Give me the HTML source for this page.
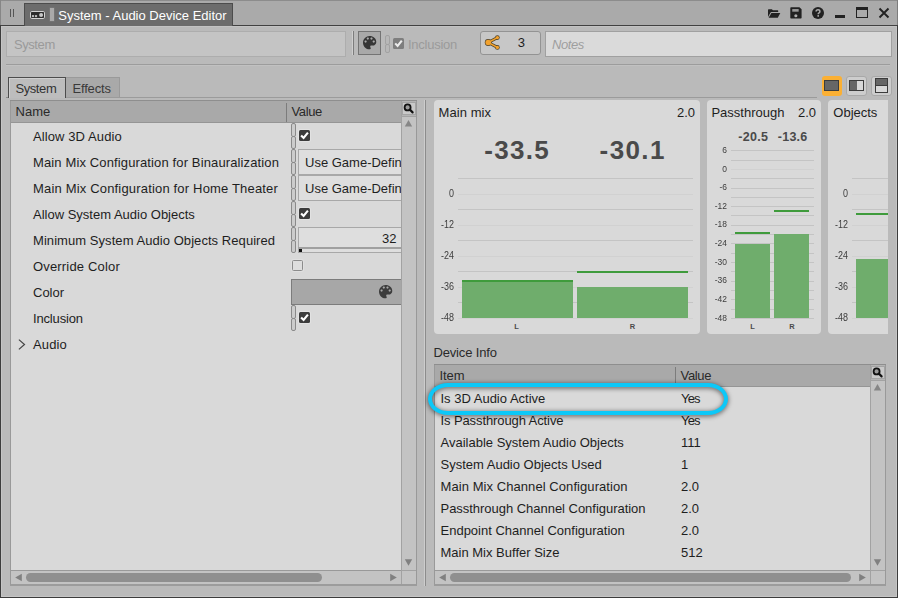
<!DOCTYPE html>
<html lang="en"><head><meta charset="utf-8"><title>System - Audio Device Editor</title>
<style>
html,body{margin:0;padding:0;background:#bababa;}
body{width:898px;height:598px;overflow:hidden;position:relative;font-family:"Liberation Sans",sans-serif;font-size:13px;color:#1e1e1e;}
#root{position:absolute;left:0;top:0;width:898px;height:598px;overflow:hidden;background:#bababa;}
#root div{position:absolute;box-sizing:border-box;}
#root svg{position:absolute;overflow:visible;}
.t{white-space:nowrap;}
.b{white-space:nowrap;font-weight:bold;color:#4a4a4a;}
.lab{white-space:nowrap;color:#3c3c3c;font-size:10.3px;line-height:12px;text-align:right;width:30px;transform:scaleX(0.87);transform-origin:100% 50%;}
</style></head><body><div id="root">
<div style="left:0px;top:0px;width:898px;height:26px;background:#aaaaaa;border-top:1px solid #8c8c8c;border-bottom:1px solid #414141;"></div>
<div style="left:0px;top:26px;width:898px;height:1px;background:#c3c3c3;"></div>
<div style="left:10px;top:9px;width:1px;height:8px;background:#555;"></div>
<div style="left:13px;top:9px;width:1px;height:8px;background:#555;"></div>
<div style="left:24px;top:3px;width:209px;height:23px;background:#6c6c6c;border:1px solid #4c4c4c;border-bottom:none;"></div>
<svg style="left:30px;top:11px" width="15" height="8" viewBox="0 0 15 8"><rect x="0.5" y="0.5" width="14" height="7" rx="1.3" fill="#2c2c2c" stroke="#d2d2d2" stroke-width="1"/><rect x="1.9" y="4.1" width="2.1" height="2" fill="#bcbcbc"/><rect x="4.9" y="4.1" width="2.2" height="2" fill="#bcbcbc"/><circle cx="11.1" cy="3.9" r="2" fill="#c8c8c8"/></svg>
<div style="left:50px;top:8px;width:4px;height:13px;background:#a9a9a9;box-shadow:0 0 0 0.5px rgba(255,255,255,0.12);"></div>
<div class="t" style="left:58.3px;top:8.00px;font-size:13px;line-height:15px;color:#fff;">System - Audio Device Editor</div>
<svg style="left:767.8px;top:8.9px" width="12.3" height="8.7" viewBox="0 0 12.3 8.7"><path d="M0 0.7 Q0 0.2 0.5 0.2 H3.9 L4.9 1.3 H9.7 Q10.2 1.3 10.2 1.8 V3.1 H3.3 Q2.7 3.1 2.4 3.7 L0 8.1 Z" fill="#222"/><path d="M3.4 4 H12.3 L9.8 8.7 H0.6 Z" fill="#222"/></svg>
<svg style="left:790.2px;top:7.1px" width="11.9" height="11.7" viewBox="0 0 12 12"><path d="M0.2 1 Q0.2 0.2 1 0.2 H9.6 L11.8 2.4 V11 Q11.8 11.8 11 11.8 H1 Q0.2 11.8 0.2 11 Z" fill="#222"/><rect x="2.2" y="2.1" width="6.6" height="2.7" fill="#999"/><circle cx="5.9" cy="9" r="1.6" fill="#b0b0b0"/></svg>
<svg style="left:812.1px;top:6.9px" width="12" height="12" viewBox="0 0 12 12"><circle cx="6" cy="6" r="6" fill="#222"/><path d="M4.1 4.6 Q4.1 2.7 6 2.7 Q7.9 2.7 7.9 4.4 Q7.9 5.3 7 5.9 Q6.2 6.4 6.2 7.3" fill="none" stroke="#aaaaaa" stroke-width="1.5"/><rect x="5.4" y="8.1" width="1.6" height="1.6" fill="#aaaaaa"/></svg>
<div style="left:835px;top:15px;width:10px;height:3px;background:#222;"></div>
<div style="left:856px;top:7px;width:12px;height:11px;border:1px solid #222;border-top:3px solid #222;"></div>
<svg style="left:879px;top:8px" width="10" height="10" viewBox="0 0 10 10"><path d="M0.5 0.5 L9.5 9.5 M9.5 0.5 L0.5 9.5" stroke="#222" stroke-width="1.9" fill="none"/></svg>
<div style="left:6px;top:31px;width:340px;height:26px;background:#c4c4c4;border:1px solid #adadad;"></div>
<div class="t" style="left:13.9px;top:36.50px;font-size:13px;line-height:15px;color:#9a9a9a;letter-spacing:-0.4px;">System</div>
<div style="left:352px;top:31px;width:1px;height:24px;background:#cfcfcf;"></div>
<div style="left:353px;top:31px;width:1px;height:24px;background:#7c7c7c;"></div>
<div style="left:358px;top:31px;width:23px;height:24px;background:#a9a9a9;border:1px solid #747474;"></div>
<svg style="left:362.9px;top:35.9px" width="13.3" height="13.3" viewBox="3 3 18 18"><path fill-rule="evenodd" d="M12 3c-4.97 0-9 4.030-9 9s4.030 9 9 9c.830 0 1.500-.670 1.500-1.500 0-.390-.150-.740-.390-1.010-.230-.260-.380-.610-.380-.990 0-.830.670-1.500 1.500-1.500H16c2.760 0 5-2.240 5-5 0-4.420-4.030-8-9-8zm-5.500 9c-.830 0-1.500-.670-1.500-1.500S5.670 9 6.500 9 8 9.670 8 10.500 7.330 12 6.500 12zm3-4C8.670 8 8 7.330 8 6.500S8.670 5 9.500 5s1.500.670 1.500 1.500S10.330 8 9.500 8zm5 0c-.830 0-1.500-.670-1.500-1.500S13.670 5 14.500 5s1.500.670 1.500 1.500S15.330 8 14.500 8zm3 4c-.830 0-1.500-.670-1.500-1.500S16.670 9 17.500 9s1.500.670 1.500 1.500-.670 1.500-1.500 1.500z" fill="#363636"/></svg>
<div style="left:385px;top:35px;width:5px;height:9.5px;background:#b8b8b8;border:1px solid #a2a2a2;border-radius:2px;"></div>
<div style="left:385px;top:43.5px;width:5px;height:9.5px;background:#b8b8b8;border:1px solid #a2a2a2;border-radius:2px;"></div>
<div style="left:393px;top:38px;width:11px;height:11px;background:#7e7e7e;border-radius:1.5px;"></div>
<svg style="left:393px;top:38px" width="11" height="11" viewBox="0 0 11 11"><path d="M2.2 5.4 L4.6 8 L8.8 2.7" stroke="#ececec" stroke-width="2.1" fill="none"/></svg>
<div class="t" style="left:408px;top:36.60px;font-size:13px;line-height:15px;color:#9a9a9a;letter-spacing:-0.25px;">Inclusion</div>
<div style="left:480px;top:31px;width:61px;height:24px;background:#c7c7c7;border:1px solid #939393;border-radius:3px;"></div>
<svg style="left:0;top:0" width="898" height="598"><g fill="#4f4128" stroke="#4f4128"><path d="M488.2 42.5 L497.4 37.6 M488.2 42.5 L497.4 47.4" stroke-width="3" fill="none"/><circle cx="488.2" cy="42.5" r="3.4" stroke="none"/><circle cx="497.4" cy="37.6" r="2.3" stroke="none"/><circle cx="497.4" cy="47.4" r="2.3" stroke="none"/></g><g fill="#f2a22e" stroke="#f2a22e"><path d="M488.2 42.5 L497.4 37.6 M488.2 42.5 L497.4 47.4" stroke-width="1.5" fill="none"/><circle cx="488.2" cy="42.5" r="2.75" stroke="none"/><circle cx="497.4" cy="37.6" r="1.65" stroke="none"/><circle cx="497.4" cy="47.4" r="1.65" stroke="none"/></g></svg>
<div class="t" style="left:517.8px;top:35.20px;font-size:13px;line-height:15px;">3</div>
<div style="left:545px;top:31px;width:347px;height:26px;background:#dadada;border:1px solid #a0a0a0;"></div>
<div class="t" style="left:552px;top:36.50px;font-size:13px;line-height:15px;color:#9e9e9e;font-style:italic;letter-spacing:-0.4px;">Notes</div>
<div style="left:6px;top:64px;width:884px;height:1px;background:#9c9c9c;"></div>
<div style="left:6px;top:65px;width:884px;height:1px;background:#c1c1c1;"></div>
<div style="left:66px;top:97px;width:751px;height:1px;background:#9b9b9b;"></div>
<div style="left:66px;top:77px;width:54px;height:20px;background:#a9a9a9;border:1px solid #9a9a9a;border-bottom:none;border-left:none;"></div>
<div style="left:8px;top:77px;width:58px;height:21px;background:#bdbdbd;border:1px solid #4c4c4c;border-bottom:none;box-shadow:inset 1px 1px 0 #cfcfcf;"></div>
<div style="left:6px;top:97px;width:2px;height:1px;background:#8a8a8a;"></div>
<div class="t" style="left:15.4px;top:80.60px;font-size:13px;line-height:15px;color:#333;letter-spacing:-0.4px;">System</div>
<div class="t" style="left:72.4px;top:80.60px;font-size:13px;line-height:15px;color:#3a3a3a;letter-spacing:-0.15px;">Effects</div>
<div style="left:821.6px;top:75.8px;width:20.0px;height:20.0px;background:#fbb034;border-radius:3px;"></div>
<div style="left:824px;top:80px;width:15.299999999999955px;height:11px;background:#666;border:1px solid #3c3c3c;"></div>
<div style="left:846px;top:76px;width:21px;height:20px;background:#cdcdcd;border:1px solid #a8a8a8;border-radius:3px;"></div>
<div style="left:849px;top:80px;width:15px;height:11px;background:#d8d8d8;border:1px solid #3c3c3c;"></div>
<div style="left:850px;top:81px;width:7px;height:9px;background:#666;"></div>
<div style="left:871px;top:76px;width:21px;height:20px;background:#cdcdcd;border:1px solid #a8a8a8;border-radius:3px;"></div>
<div style="left:875px;top:78px;width:13px;height:15px;background:#d8d8d8;border:1px solid #3c3c3c;"></div>
<div style="left:876px;top:79px;width:11px;height:7px;background:#666;border-bottom:1px solid #3c3c3c;"></div>
<div style="left:10px;top:100px;width:407px;height:486px;background:#d9d9d9;border:1px solid #999999;border-bottom:2px solid #9c9c9c;"></div>
<div style="left:11px;top:101px;width:390px;height:21.5px;background:#a9a9a9;"></div>
<div style="left:11px;top:122px;width:390px;height:1px;background:#959595;"></div>
<div style="left:10px;top:100px;width:407px;height:1px;background:#8e8e8e;"></div>
<div style="left:286px;top:103px;width:1px;height:18.5px;background:#7c7c7c;"></div>
<div style="left:401px;top:116px;width:15px;height:455px;background:#c3c3c3;border:1px solid #a2a2a2;border-right:none;"></div>
<div style="left:401px;top:101px;width:15px;height:15px;background:#b4b4b4;border-left:1px solid #a0a0a0;"></div>
<div style="left:402px;top:102px;width:14px;height:13px;background:#c9c9c9;border:1px solid #a4a4a4;"></div>
<svg style="left:0;top:0" width="898" height="598"><circle cx="407.6" cy="107.4" r="3" fill="#9a9a9a" stroke="#111" stroke-width="1.8"/><path d="M410.0 109.80000000000001 L412.6 112.4" stroke="#111" stroke-width="2.2" stroke-linecap="round"/></svg>
<svg style="left:0;top:0" width="898" height="598"><polygon points="404.8,126.6 412.2,126.6 408.5,120.0" fill="#868686"/></svg>
<svg style="left:0;top:0" width="898" height="598"><polygon points="404.8,559.2 412.2,559.2 408.5,565.8" fill="#808080"/></svg>
<div style="left:11px;top:570px;width:390px;height:14px;background:#c3c3c3;border-top:1px solid #999;"></div>
<div style="left:401px;top:570px;width:15px;height:14px;background:#c3c3c3;border-top:1px solid #a2a2a2;border-left:1px solid #a2a2a2;"></div>
<div style="left:26px;top:573px;width:296px;height:9px;background:#8f8f8f;border-radius:4.5px;"></div>
<svg style="left:0;top:0" width="898" height="598"><polygon points="21.8,573.8 21.8,581.2 15.2,577.5" fill="#808080"/></svg>
<svg style="left:0;top:0" width="898" height="598"><polygon points="390.2,573.8 390.2,581.2 396.8,577.5" fill="#808080"/></svg>
<div class="t" style="left:15.6px;top:103.70px;font-size:13px;line-height:15px;color:#2a2a2a;">Name</div>
<div class="t" style="left:291.4px;top:103.70px;font-size:13px;line-height:15px;color:#2a2a2a;letter-spacing:-0.35px;">Value</div>
<div class="t" style="left:33px;top:128.80px;font-size:13px;line-height:15px;letter-spacing:0.1px;">Allow 3D Audio</div>
<div class="t" style="left:33px;top:154.80px;font-size:13px;line-height:15px;letter-spacing:0.13px;">Main Mix Configuration for Binauralization</div>
<div class="t" style="left:33px;top:180.80px;font-size:13px;line-height:15px;letter-spacing:0.175px;">Main Mix Configuration for Home Theater</div>
<div class="t" style="left:33px;top:206.80px;font-size:13px;line-height:15px;">Allow System Audio Objects</div>
<div class="t" style="left:33px;top:232.80px;font-size:13px;line-height:15px;letter-spacing:0.06px;">Minimum System Audio Objects Required</div>
<div class="t" style="left:33px;top:258.80px;font-size:13px;line-height:15px;letter-spacing:0.17px;">Override Color</div>
<div class="t" style="left:33px;top:284.80px;font-size:13px;line-height:15px;">Color</div>
<div class="t" style="left:33px;top:310.80px;font-size:13px;line-height:15px;letter-spacing:-0.16px;">Inclusion</div>
<div class="t" style="left:33px;top:336.80px;font-size:13px;line-height:15px;letter-spacing:0.12px;">Audio</div>
<svg style="left:0;top:0" width="898" height="598"><path d="M18.9 339.6 L24.5 344.5 L18.9 349.4" stroke="#444" stroke-width="1.2" fill="none"/></svg>
<div style="left:291px;top:123px;width:5px;height:13.5px;background:#cccccc;border:1px solid #8a8a8a;border-radius:2px;"></div>
<div style="left:291px;top:135.5px;width:5px;height:13.199999999999989px;background:#cccccc;border:1px solid #8a8a8a;border-radius:2px;"></div>
<div style="left:291px;top:149px;width:5px;height:13.5px;background:#cccccc;border:1px solid #8a8a8a;border-radius:2px;"></div>
<div style="left:291px;top:161.5px;width:5px;height:13.199999999999989px;background:#cccccc;border:1px solid #8a8a8a;border-radius:2px;"></div>
<div style="left:291px;top:175px;width:5px;height:13.5px;background:#cccccc;border:1px solid #8a8a8a;border-radius:2px;"></div>
<div style="left:291px;top:187.5px;width:5px;height:13.199999999999989px;background:#cccccc;border:1px solid #8a8a8a;border-radius:2px;"></div>
<div style="left:291px;top:201px;width:5px;height:13.5px;background:#cccccc;border:1px solid #8a8a8a;border-radius:2px;"></div>
<div style="left:291px;top:213.5px;width:5px;height:13.199999999999989px;background:#cccccc;border:1px solid #8a8a8a;border-radius:2px;"></div>
<div style="left:291px;top:227px;width:5px;height:13.5px;background:#cccccc;border:1px solid #8a8a8a;border-radius:2px;"></div>
<div style="left:291px;top:239.5px;width:5px;height:13.199999999999989px;background:#cccccc;border:1px solid #8a8a8a;border-radius:2px;"></div>
<div style="left:291px;top:305px;width:5px;height:13.5px;background:#cccccc;border:1px solid #8a8a8a;border-radius:2px;"></div>
<div style="left:291px;top:317.5px;width:5px;height:13.199999999999989px;background:#cccccc;border:1px solid #8a8a8a;border-radius:2px;"></div>
<div style="left:299px;top:130px;width:11px;height:11px;background:#3c3c3c;border-radius:1.5px;box-shadow:0 0 0 1px rgba(255,255,255,0.25);"></div>
<svg style="left:299px;top:130px" width="11" height="11" viewBox="0 0 11 11"><path d="M2.1 5.4 L4.6 8 L8.9 2.6" stroke="#fff" stroke-width="2.1" fill="none"/></svg>
<div style="left:299px;top:208px;width:11px;height:11px;background:#3c3c3c;border-radius:1.5px;box-shadow:0 0 0 1px rgba(255,255,255,0.25);"></div>
<svg style="left:299px;top:208px" width="11" height="11" viewBox="0 0 11 11"><path d="M2.1 5.4 L4.6 8 L8.9 2.6" stroke="#fff" stroke-width="2.1" fill="none"/></svg>
<div style="left:299px;top:312px;width:11px;height:11px;background:#3c3c3c;border-radius:1.5px;box-shadow:0 0 0 1px rgba(255,255,255,0.25);"></div>
<svg style="left:299px;top:312px" width="11" height="11" viewBox="0 0 11 11"><path d="M2.1 5.4 L4.6 8 L8.9 2.6" stroke="#fff" stroke-width="2.1" fill="none"/></svg>
<div style="left:298px;top:149px;width:103px;height:25.5px;background:#dedede;border:1px solid #a8a8a8;border-right:none;overflow:hidden;"></div>
<div class="t" style="left:305px;top:154.70px;font-size:13px;line-height:15px;overflow:hidden;width:96px;">Use Game-Defin</div>
<div style="left:298px;top:175px;width:103px;height:25.5px;background:#dedede;border:1px solid #a8a8a8;border-right:none;overflow:hidden;"></div>
<div class="t" style="left:305px;top:180.70px;font-size:13px;line-height:15px;overflow:hidden;width:96px;">Use Game-Defin</div>
<div style="left:298px;top:227px;width:103px;height:21px;background:#dedede;border:1px solid #a8a8a8;border-right:none;"></div>
<div class="t" style="left:382px;top:231.00px;font-size:13px;line-height:15px;">32</div>
<div style="left:298px;top:247px;width:103px;height:6px;background:#dedede;border:1px solid #a8a8a8;border-right:none;border-top:2px solid #a0a0a0;"></div>
<div style="left:299px;top:249px;width:3px;height:3px;background:#111;"></div>
<div style="left:292px;top:260px;width:11px;height:11px;background:#dedede;border:1px solid #8c8c8c;border-radius:1.5px;box-shadow:0 0 0 1px rgba(255,255,255,0.18);"></div>
<div style="left:291px;top:279px;width:110px;height:26px;background:#a7a7a7;border:1px solid #7c7c7c;border-right:none;"></div>
<svg style="left:378.8px;top:285.1px" width="13.3" height="13.3" viewBox="3 3 18 18"><path fill-rule="evenodd" d="M12 3c-4.97 0-9 4.030-9 9s4.030 9 9 9c.830 0 1.500-.670 1.500-1.500 0-.390-.150-.740-.390-1.010-.230-.260-.380-.610-.380-.990 0-.830.670-1.500 1.500-1.500H16c2.760 0 5-2.240 5-5 0-4.420-4.030-8-9-8zm-5.500 9c-.830 0-1.500-.670-1.500-1.500S5.670 9 6.500 9 8 9.670 8 10.500 7.330 12 6.500 12zm3-4C8.670 8 8 7.330 8 6.500S8.670 5 9.500 5s1.500.670 1.500 1.500S10.330 8 9.500 8zm5 0c-.830 0-1.500-.670-1.500-1.500S13.670 5 14.500 5s1.500.670 1.500 1.500S15.330 8 14.500 8zm3 4c-.830 0-1.500-.670-1.500-1.500S16.670 9 17.500 9s1.500.670 1.500 1.500-.670 1.500-1.500 1.500z" fill="#3c3c3c"/></svg>
<div style="left:424px;top:100px;width:1px;height:486px;background:#cdcdcd;"></div>
<div style="left:425px;top:100px;width:1px;height:486px;background:#8c8c8c;"></div>
<div style="left:434px;top:100px;width:266px;height:234px;background:#d9d9d9;border-radius:4px;"></div>
<div class="t" style="left:438.6px;top:104.70px;font-size:13px;line-height:15px;letter-spacing:0.05px;">Main mix</div>
<div class="t" style="right:203px;top:104.70px;font-size:13px;line-height:15px;">2.0</div>
<div class="b" style="left:484.2px;top:135px;font-size:26px;line-height:30px;letter-spacing:1.3px;">-33.5</div>
<div class="b" style="left:599.6px;top:135px;font-size:26px;line-height:30px;letter-spacing:1.4px;">-30.1</div>
<div style="left:458px;top:178px;width:235px;height:1px;background:#c4c4c4;"></div>
<div style="left:458px;top:194px;width:235px;height:1px;background:#d1d1d1;"></div>
<div style="left:458px;top:209px;width:235px;height:1px;background:#c4c4c4;"></div>
<div style="left:458px;top:225px;width:235px;height:1px;background:#d1d1d1;"></div>
<div style="left:458px;top:240px;width:235px;height:1px;background:#c4c4c4;"></div>
<div style="left:458px;top:256px;width:235px;height:1px;background:#d1d1d1;"></div>
<div style="left:458px;top:271px;width:235px;height:1px;background:#c4c4c4;"></div>
<div style="left:458px;top:287px;width:235px;height:1px;background:#d1d1d1;"></div>
<div style="left:458px;top:302px;width:235px;height:1px;background:#c4c4c4;"></div>
<div style="left:458px;top:318px;width:235px;height:1px;background:#d1d1d1;"></div>
<div class="lab" style="left:423.6px;top:187.5px;">0</div>
<div class="lab" style="left:423.6px;top:218.5px;">-12</div>
<div class="lab" style="left:423.6px;top:249.5px;">-24</div>
<div class="lab" style="left:423.6px;top:280.5px;">-36</div>
<div class="lab" style="left:423.6px;top:311.5px;">-48</div>
<div style="left:462px;top:280px;width:110.5px;height:38px;background:#6fad6c;border-top:2px solid #3f9b3c;"></div>
<div style="left:577px;top:287px;width:111px;height:31px;background:#6fad6c;"></div>
<div style="left:577px;top:271px;width:111px;height:2px;background:#3f9b3c;"></div>
<div class="b" style="left:514.3px;top:322px;font-size:7.5px;line-height:10px;color:#4a4a4a;">L</div>
<div class="b" style="left:629.8px;top:322px;font-size:7.5px;line-height:10px;color:#4a4a4a;">R</div>
<div style="left:707px;top:100px;width:114px;height:234px;background:#d9d9d9;border-radius:4px;"></div>
<div class="t" style="left:711.4px;top:104.70px;font-size:13px;line-height:15px;letter-spacing:0.02px;">Passthrough</div>
<div class="t" style="right:82px;top:104.70px;font-size:13px;line-height:15px;">2.0</div>
<div class="b" style="left:738.2px;top:130.2px;font-size:12.5px;line-height:15px;letter-spacing:0.3px;">-20.5</div>
<div class="b" style="left:777.8px;top:130.2px;font-size:12.5px;line-height:15px;letter-spacing:0.25px;">-13.6</div>
<div style="left:731px;top:150px;width:83px;height:1px;background:#c4c4c4;"></div>
<div style="left:731px;top:160px;width:83px;height:1px;background:#c4c4c4;"></div>
<div style="left:731px;top:169px;width:83px;height:1px;background:#d1d1d1;"></div>
<div style="left:731px;top:178px;width:83px;height:1px;background:#c4c4c4;"></div>
<div style="left:731px;top:188px;width:83px;height:1px;background:#c4c4c4;"></div>
<div style="left:731px;top:197px;width:83px;height:1px;background:#c4c4c4;"></div>
<div style="left:731px;top:206px;width:83px;height:1px;background:#c4c4c4;"></div>
<div style="left:731px;top:215px;width:83px;height:1px;background:#c4c4c4;"></div>
<div style="left:731px;top:225px;width:83px;height:1px;background:#c4c4c4;"></div>
<div style="left:731px;top:234px;width:83px;height:1px;background:#c4c4c4;"></div>
<div style="left:731px;top:243px;width:83px;height:1px;background:#c4c4c4;"></div>
<div style="left:731px;top:253px;width:83px;height:1px;background:#c4c4c4;"></div>
<div style="left:731px;top:262px;width:83px;height:1px;background:#c4c4c4;"></div>
<div style="left:731px;top:271px;width:83px;height:1px;background:#c4c4c4;"></div>
<div style="left:731px;top:281px;width:83px;height:1px;background:#c4c4c4;"></div>
<div style="left:731px;top:290px;width:83px;height:1px;background:#c4c4c4;"></div>
<div style="left:731px;top:299px;width:83px;height:1px;background:#c4c4c4;"></div>
<div style="left:731px;top:309px;width:83px;height:1px;background:#c4c4c4;"></div>
<div style="left:731px;top:318px;width:83px;height:1px;background:#c4c4c4;"></div>
<div class="lab" style="left:697px;top:143.9px;font-size:9.2px;transform:scaleX(0.92);">6</div>
<div class="lab" style="left:697px;top:162.5px;font-size:9.2px;transform:scaleX(0.92);">0</div>
<div class="lab" style="left:697px;top:181.1px;font-size:9.2px;transform:scaleX(0.92);">-6</div>
<div class="lab" style="left:697px;top:199.8px;font-size:9.2px;transform:scaleX(0.92);">-12</div>
<div class="lab" style="left:697px;top:218.4px;font-size:9.2px;transform:scaleX(0.92);">-18</div>
<div class="lab" style="left:697px;top:237.0px;font-size:9.2px;transform:scaleX(0.92);">-24</div>
<div class="lab" style="left:697px;top:255.6px;font-size:9.2px;transform:scaleX(0.92);">-30</div>
<div class="lab" style="left:697px;top:274.2px;font-size:9.2px;transform:scaleX(0.92);">-36</div>
<div class="lab" style="left:697px;top:292.9px;font-size:9.2px;transform:scaleX(0.92);">-42</div>
<div class="lab" style="left:697px;top:311.5px;font-size:9.2px;transform:scaleX(0.92);">-48</div>
<div style="left:735px;top:244px;width:35px;height:74px;background:#6fad6c;"></div>
<div style="left:735px;top:232px;width:35px;height:2px;background:#3f9b3c;"></div>
<div style="left:774px;top:234px;width:35px;height:84px;background:#6fad6c;"></div>
<div style="left:774px;top:210px;width:35px;height:2px;background:#3f9b3c;"></div>
<div class="b" style="left:750.3px;top:322px;font-size:7.5px;line-height:10px;color:#4a4a4a;">L</div>
<div class="b" style="left:789.3px;top:322px;font-size:7.5px;line-height:10px;color:#4a4a4a;">R</div>
<div style="left:828px;top:100px;width:60px;height:234px;background:#d9d9d9;border-radius:4px 0 0 4px;"></div>
<div class="t" style="left:833.3px;top:104.70px;font-size:13px;line-height:15px;">Objects</div>
<div style="left:852px;top:178px;width:36px;height:1px;background:#c4c4c4;"></div>
<div style="left:852px;top:194px;width:36px;height:1px;background:#d1d1d1;"></div>
<div style="left:852px;top:209px;width:36px;height:1px;background:#c4c4c4;"></div>
<div style="left:852px;top:225px;width:36px;height:1px;background:#d1d1d1;"></div>
<div style="left:852px;top:240px;width:36px;height:1px;background:#c4c4c4;"></div>
<div style="left:852px;top:256px;width:36px;height:1px;background:#d1d1d1;"></div>
<div style="left:852px;top:271px;width:36px;height:1px;background:#c4c4c4;"></div>
<div style="left:852px;top:287px;width:36px;height:1px;background:#d1d1d1;"></div>
<div style="left:852px;top:302px;width:36px;height:1px;background:#c4c4c4;"></div>
<div style="left:852px;top:318px;width:36px;height:1px;background:#d1d1d1;"></div>
<div class="lab" style="left:817.9px;top:188.1px;">0</div>
<div class="lab" style="left:817.9px;top:219.1px;">-12</div>
<div class="lab" style="left:817.9px;top:250.1px;">-24</div>
<div class="lab" style="left:817.9px;top:281.1px;">-36</div>
<div class="lab" style="left:817.9px;top:312.1px;">-48</div>
<div style="left:856px;top:258.5px;width:32px;height:59.5px;background:#6fad6c;"></div>
<div style="left:856px;top:213px;width:32px;height:2px;background:#3f9b3c;"></div>
<div class="t" style="left:433.4px;top:344.80px;font-size:13px;line-height:15px;letter-spacing:-0.15px;color:#2a2a2a;">Device Info</div>
<div style="left:434px;top:364px;width:452px;height:222px;background:#d9d9d9;border:1px solid #999999;border-bottom:2px solid #9c9c9c;"></div>
<div style="left:435px;top:365px;width:435px;height:21.5px;background:#a9a9a9;"></div>
<div style="left:435px;top:386px;width:435px;height:1px;background:#959595;"></div>
<div style="left:434px;top:364px;width:452px;height:1px;background:#8e8e8e;"></div>
<div style="left:675px;top:367px;width:1px;height:18.5px;background:#7c7c7c;"></div>
<div style="left:870px;top:380px;width:15px;height:191px;background:#c3c3c3;border:1px solid #a2a2a2;border-right:none;"></div>
<div style="left:870px;top:365px;width:15px;height:15px;background:#b4b4b4;border-left:1px solid #a0a0a0;"></div>
<div style="left:871px;top:366px;width:14px;height:13px;background:#c9c9c9;border:1px solid #a4a4a4;"></div>
<svg style="left:0;top:0" width="898" height="598"><circle cx="876.6" cy="371.4" r="3" fill="#9a9a9a" stroke="#111" stroke-width="1.8"/><path d="M879.0 373.79999999999995 L881.6 376.4" stroke="#111" stroke-width="2.2" stroke-linecap="round"/></svg>
<svg style="left:0;top:0" width="898" height="598"><polygon points="873.8,390.6 881.2,390.6 877.5,384.0" fill="#868686"/></svg>
<svg style="left:0;top:0" width="898" height="598"><polygon points="873.8,559.2 881.2,559.2 877.5,565.8" fill="#808080"/></svg>
<div style="left:435px;top:570px;width:435px;height:14px;background:#c3c3c3;border-top:1px solid #999;"></div>
<div style="left:870px;top:570px;width:15px;height:14px;background:#c3c3c3;border-top:1px solid #a2a2a2;border-left:1px solid #a2a2a2;"></div>
<div style="left:450px;top:573px;width:401px;height:9px;background:#8f8f8f;border-radius:4.5px;"></div>
<svg style="left:0;top:0" width="898" height="598"><polygon points="445.8,573.8 445.8,581.2 439.2,577.5" fill="#808080"/></svg>
<svg style="left:0;top:0" width="898" height="598"><polygon points="859.2,573.8 859.2,581.2 865.8,577.5" fill="#808080"/></svg>
<div class="t" style="left:439.4px;top:367.60px;font-size:13px;line-height:15px;color:#2a2a2a;">Item</div>
<div class="t" style="left:680.6px;top:367.60px;font-size:13px;line-height:15px;color:#2a2a2a;letter-spacing:-0.35px;">Value</div>
<div class="t" style="left:440.5px;top:390.50px;font-size:13px;line-height:15px;letter-spacing:0px;">Is 3D Audio Active</div>
<div class="t" style="left:681px;top:390.50px;font-size:13px;line-height:15px;letter-spacing:-0.8px;">Yes</div>
<div class="t" style="left:440.5px;top:412.50px;font-size:13px;line-height:15px;letter-spacing:-0.1px;">Is Passthrough Active</div>
<div class="t" style="left:681px;top:412.50px;font-size:13px;line-height:15px;letter-spacing:-0.8px;">Yes</div>
<div class="t" style="left:440.5px;top:434.50px;font-size:13px;line-height:15px;letter-spacing:0px;">Available System Audio Objects</div>
<div class="t" style="left:681px;top:434.50px;font-size:13px;line-height:15px;">111</div>
<div class="t" style="left:440.5px;top:456.50px;font-size:13px;line-height:15px;letter-spacing:0px;">System Audio Objects Used</div>
<div class="t" style="left:681px;top:456.50px;font-size:13px;line-height:15px;">1</div>
<div class="t" style="left:440.5px;top:478.50px;font-size:13px;line-height:15px;letter-spacing:0.07px;">Main Mix Channel Configuration</div>
<div class="t" style="left:681px;top:478.50px;font-size:13px;line-height:15px;">2.0</div>
<div class="t" style="left:440.5px;top:500.50px;font-size:13px;line-height:15px;letter-spacing:-0.03px;">Passthrough Channel Configuration</div>
<div class="t" style="left:681px;top:500.50px;font-size:13px;line-height:15px;">2.0</div>
<div class="t" style="left:440.5px;top:522.50px;font-size:13px;line-height:15px;letter-spacing:0px;">Endpoint Channel Configuration</div>
<div class="t" style="left:681px;top:522.50px;font-size:13px;line-height:15px;">2.0</div>
<div class="t" style="left:440.5px;top:544.50px;font-size:13px;line-height:15px;letter-spacing:0px;">Main Mix Buffer Size</div>
<div class="t" style="left:681px;top:544.50px;font-size:13px;line-height:15px;">512</div>
<div style="left:428px;top:383px;width:300px;height:32px;border:4px solid #0cc8f8;border-radius:20px / 16px;filter:drop-shadow(0.5px 1px 2.5px rgba(0,0,0,0.65));"></div>
<div style="left:1px;top:26px;width:1px;height:571px;background:#c5c5c5;"></div>
<div style="left:896px;top:26px;width:1px;height:571px;background:#c5c5c5;"></div>
<div style="left:1px;top:596px;width:896px;height:1px;background:#c5c5c5;"></div>
<div style="left:0px;top:0px;width:1px;height:25px;background:#868686;"></div>
<div style="left:897px;top:0px;width:1px;height:25px;background:#7c7c7c;"></div>
<div style="left:0px;top:25px;width:1px;height:573px;background:#3c3c3c;"></div>
<div style="left:897px;top:25px;width:1px;height:573px;background:#3c3c3c;"></div>
<div style="left:0px;top:597px;width:898px;height:1px;background:#3c3c3c;"></div>
</div></body></html>
